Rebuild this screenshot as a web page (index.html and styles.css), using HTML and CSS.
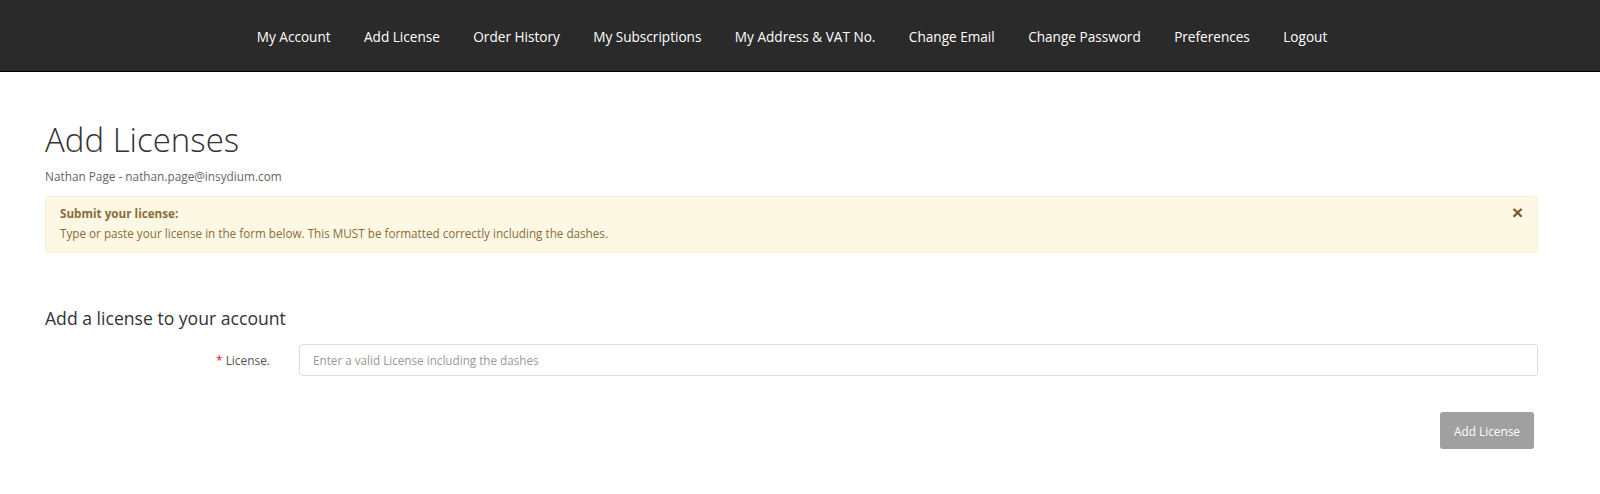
FILE: index.html
```html
<!DOCTYPE html>
<html lang="en">
<head>
    <meta charset="UTF-8">
    <title>Add Licenses</title>
    <link rel="stylesheet" href="styles.css">
</head>
<body>
    <nav class="navbar">
        <a href="#">My Account</a>
        <a href="#">Add License</a>
        <a href="#">Order History</a>
        <a href="#">My Subscriptions</a>
        <a href="#">My Address &amp; VAT No.</a>
        <a href="#">Change Email</a>
        <a href="#">Change Password</a>
        <a href="#">Preferences</a>
        <a href="#">Logout</a>
    </nav>
    <div class="container">
        <h1>Add Licenses</h1>
        <p class="user">Nathan Page - nathan.page@insydium.com</p>
        <div class="alert">
            <button class="close">&times;</button>
            <strong>Submit your license:</strong>
            <p>Type or paste your license in the form below. This MUST be formatted correctly including the dashes.</p>
        </div>
        <h2>Add a license to your account</h2>
        <div class="form-row">
            <label for="license"><span class="req">*</span> License.</label>
            <input type="text" id="license" placeholder="Enter a valid License including the dashes">
        </div>
        <div class="actions">
            <button class="add-button">Add License</button>
        </div>
    </div>
</body>
</html>
```

FILE: styles.css
```css
body {
    font-family: "Open Sans", Arial, sans-serif;
    margin: 0;
    background: #fff;
    color: #333;
}
.navbar {
    background-color: #2a2a2a;
    border-bottom: 1px solid #000;
    height: 71px;
    display: flex;
    justify-content: center;
    align-items: center;
    gap: 33.4px;
    padding-right: 16px;
}
.navbar a {
    color: #fff;
    text-decoration: none;
    font-size: 13.6px;
    padding-top: 2px;
}
.container {
    padding: 0 62px 0 45px;
}
h1 {
    font-size: 33px;
    font-weight: 300;
    margin: 48px 0 0;
    line-height: 40px;
    color: #333;
}
.user {
    font-size: 11.8px;
    color: #666;
    margin: 8px 0 12px;
}
.alert {
    position: relative;
    background-color: #fcf8e3;
    border: 1px solid #faf0d4;
    border-radius: 4px;
    color: #8a6d3b;
    font-size: 11.7px;
    padding: 8px 14px 10px;
}
.alert strong {
    display: block;
    line-height: 17px;
}
.alert p {
    margin: 3px 0 0;
    line-height: 17px;
}
.close {
    position: absolute;
    top: 6px;
    right: 14px;
    background: none;
    border: none;
    padding: 0;
    font-size: 19px;
    font-weight: 700;
    line-height: 20px;
    color: #6e5a2e;
    cursor: pointer;
}
h2 {
    font-size: 17.6px;
    font-weight: 400;
    margin: 53px 0 14px;
    color: #333;
}
.form-row {
    display: flex;
    align-items: center;
}
.form-row label {
    width: 225px;
    text-align: right;
    font-size: 11.9px;
    color: #555;
    padding-right: 29px;
}
.req {
    color: #e02020;
}
.form-row input {
    flex: 1;
    height: 32px;
    box-sizing: border-box;
    border: 1px solid #ddd;
    border-radius: 4px;
    padding: 0 13px;
    font-family: inherit;
    font-size: 11.7px;
}
.form-row input::placeholder {
    color: #999;
}
.actions {
    display: flex;
    justify-content: flex-end;
    margin-top: 36px;
    padding-right: 4px;
}
.add-button {
    background-color: #a0a0a0;
    color: #fff;
    border: none;
    border-radius: 3px;
    font-family: inherit;
    font-size: 11.8px;
    width: 94px;
    height: 37px;
    cursor: pointer;
}
```
